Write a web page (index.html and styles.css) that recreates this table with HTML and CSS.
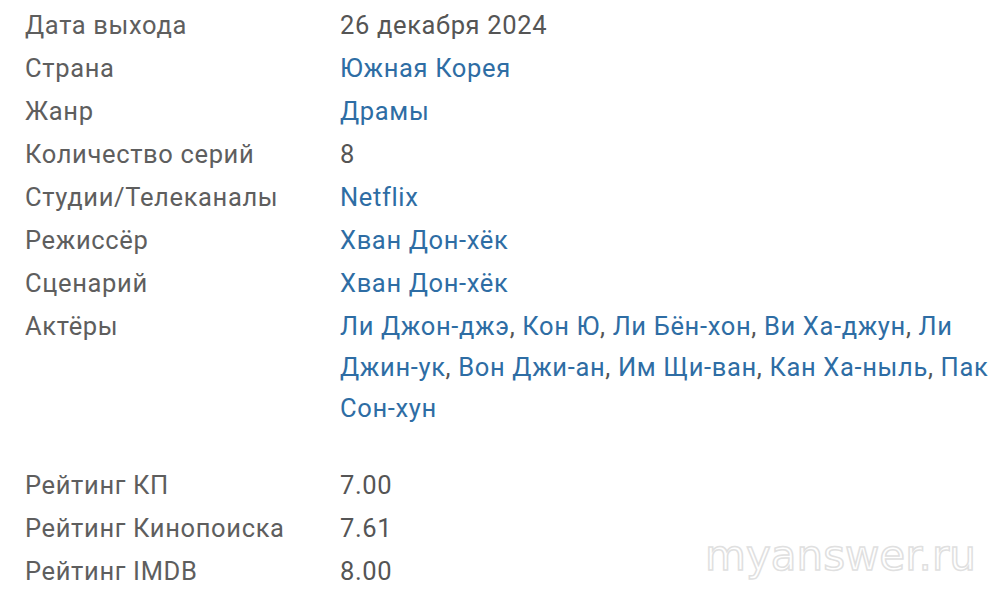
FILE: index.html
```html
<!DOCTYPE html>
<html lang="ru">
<head>
<meta charset="utf-8">
<title>Информация</title>
<link rel="stylesheet" href="styles.css">
</head>
<body>
<div class="info">
  <div class="label">Дата выхода</div><div class="value">26 декабря 2024</div>
  <div class="label">Страна</div><div class="value"><a class="link">Южная Корея</a></div>
  <div class="label">Жанр</div><div class="value"><a class="link">Драмы</a></div>
  <div class="label">Количество серий</div><div class="value">8</div>
  <div class="label">Студии/Телеканалы</div><div class="value"><a class="link">Netflix</a></div>
  <div class="label">Режиссёр</div><div class="value"><a class="link">Хван Дон-хёк</a></div>
  <div class="label">Сценарий</div><div class="value"><a class="link">Хван Дон-хёк</a></div>
  <div class="label">Актёры</div><div class="value"><a class="link">Ли Джон-джэ</a>, <a class="link">Кон Ю</a>, <a class="link">Ли Бён-хон</a>, <a class="link">Ви Ха-джун</a>, <a class="link">Ли Джин-ук</a>, <a class="link">Вон Джи-ан</a>, <a class="link">Им Щи-ван</a>, <a class="link">Кан Ха-ныль</a>, <a class="link">Пак Сон-хун</a></div>
  <div class="spacer"></div>
  <div class="label">Рейтинг КП</div><div class="value">7.00</div>
  <div class="label">Рейтинг Кинопоиска</div><div class="value">7.61</div>
  <div class="label">Рейтинг IMDB</div><div class="value">8.00</div>
</div>
<div class="watermark">myanswer.ru</div>
</body>
</html>
```
FILE: styles.css
```css
html, body {
  margin: 0;
  background: #ffffff;
}
body {
  font-family: Roboto, "Noto Sans", sans-serif;
  font-size: 25.5px;
  letter-spacing: 0.65px;
  color: #555555;
  width: 1000px;
  height: 593px;
  overflow: hidden;
  position: relative;
}
.info {
  display: grid;
  grid-template-columns: 315px 655px;
  padding: 4px 0 0 25px;
}
.label, .value {
  line-height: 41px;
  padding: 1px 0;
}
.label {
  color: #5e5e5e;
}
.value {
  color: #555555;
}
.link {
  color: #2e6da4;
  text-decoration: none;
}
.spacer {
  grid-column: 1 / -1;
  height: 34px;
}
.watermark {
  position: absolute;
  left: 705px;
  top: 531px;
  font-family: "DejaVu Sans", sans-serif;
  font-size: 42px;
  letter-spacing: 0;
  color: #ffffff;
  -webkit-text-stroke: 1.5px #e0e0e0;
}
```
